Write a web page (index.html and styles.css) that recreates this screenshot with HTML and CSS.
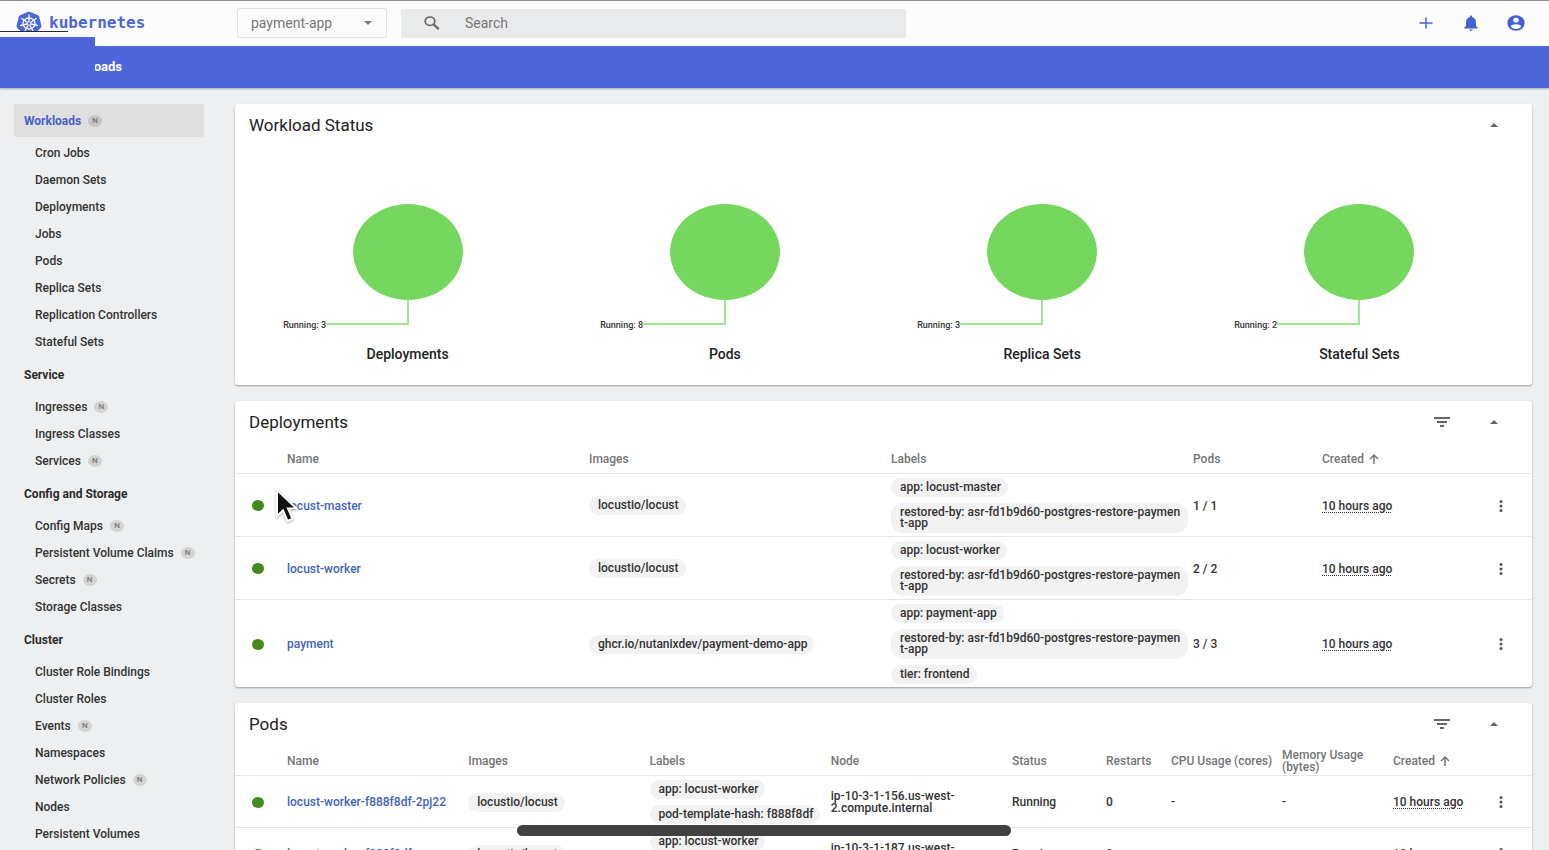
FILE: index.html
```html
<!DOCTYPE html>
<html lang="en">
<head>
<meta charset="utf-8">
<title>Kubernetes Dashboard</title>
<link rel="stylesheet" href="styles.css">
</head>
<body>
<svg class="sprite" aria-hidden="true">
  <symbol id="i-filter" viewBox="0 0 16 10"><path d="M0 0h16v2H0zM3 4h10v2H3zM6 8h4v2H6z"/></symbol>
  <symbol id="i-up" viewBox="0 0 8 4"><path d="M0 4l4-4 4 4z"/></symbol>
  <symbol id="i-more" viewBox="0 0 4 12"><circle cx="2" cy="1.6" r="1.5"/><circle cx="2" cy="6" r="1.5"/><circle cx="2" cy="10.4" r="1.5"/></symbol>
  <symbol id="i-sort" viewBox="0 0 10 10"><path d="M5 10V1.5M1 5l4-4 4 4" fill="none" stroke="currentColor" stroke-width="1.5"/></symbol>
</svg>
<div class="app">
  <header class="topbar">
    <a class="brand" href="#">
      <svg class="logo" viewBox="0 0 26 24" aria-hidden="true">
        <path d="M13 .5l9 3.8c.6.3 1 .8 1.200 1.400l2.200 9c.1.7 0 1.300-.4 1.800l-6.200 6.700c-.5.5-1 .8-1.700.8H8.900c-.7 0-1.200-.3-1.700-.8L1 16.500c-.4-.5-.5-1.100-.4-1.800l2.200-9C3 5.100 3.400 4.600 4 4.300z" fill="#4a67d6"/>
        <g fill="none" stroke="#fff" stroke-width="1.300">
          <ellipse cx="13" cy="12.500" rx="6" ry="5.500"/>
          <path d="M13 12.500V3.500M13 12.500l7.600-5.200M13 12.500l9 2.200M13 12.500l4.200 7.800M13 12.500l-4.200 7.800M13 12.500l-9 2.200M13 12.500L5.400 7.300"/>
        </g>
        <circle cx="13" cy="12.500" r="1.300" fill="#4a67d6"/>
      </svg>
      <span>kubernetes</span>
    </a>
    <div class="namespace">
      <select aria-label="Namespace"><option>payment-app</option></select>
      <svg class="caret" viewBox="0 0 8 4" aria-hidden="true"><path d="M0 0h8L4 4z"/></svg>
    </div>
    <label class="search">
      <svg viewBox="0 0 16 14" aria-hidden="true"><ellipse cx="6" cy="5.200" rx="4.800" ry="4.200" fill="none" stroke="currentColor" stroke-width="1.700"/><path d="M9.500 8.400l5.300 4.700" stroke="currentColor" stroke-width="2.100"/></svg>
      <input type="text" placeholder="Search" aria-label="Search">
    </label>
    <div class="tools">
      <button type="button" aria-label="Create"><svg width="18" height="16" viewBox="0 0 18 16"><path d="M9 2.500v11M2.500 8h13" stroke="currentColor" stroke-width="1.500"/></svg></button>
      <button type="button" aria-label="Notifications"><svg width="18" height="16" viewBox="0 0 18 16"><path d="M9 16c1 0 1.700-.6 1.700-1.400H7.300C7.300 15.400 8 16 9 16zM14 11V7c0-2.300-1.500-4.200-3.800-4.700v-.6C10.200 1 9.700.5 9 .5s-1.200.5-1.200 1.200v.6C5.500 2.800 4 4.700 4 7v4l-1.700 1.600v.9h13.400v-.9z" fill="currentColor"/></svg></button>
      <button type="button" aria-label="Account"><svg width="18" height="16" viewBox="0 0 18 16"><ellipse cx="9" cy="8" rx="8.700" ry="7.700" fill="currentColor"/><ellipse cx="9" cy="5.200" rx="2.700" ry="2.400" fill="#fff"/><path d="M9 9.200c2 0 5 .9 5.200 2.300C13.100 13 11.200 13.900 9 13.900S4.900 13 3.800 11.500C4 10.100 7 9.200 9 9.200z" fill="#fff"/></svg></button>
    </div>
  </header>
  <div class="crumbs"><h1>Workloads</h1></div>
  <div class="body">
    <nav class="side">
      <a class="head active" href="#">Workloads <i>N</i></a>
      <ul>
        <li><a href="#">Cron Jobs</a></li>
        <li><a href="#">Daemon Sets</a></li>
        <li><a href="#">Deployments</a></li>
        <li><a href="#">Jobs</a></li>
        <li><a href="#">Pods</a></li>
        <li><a href="#">Replica Sets</a></li>
        <li><a href="#">Replication Controllers</a></li>
        <li><a href="#">Stateful Sets</a></li>
      </ul>
      <a class="head" href="#">Service</a>
      <ul>
        <li><a href="#">Ingresses <i>N</i></a></li>
        <li><a href="#">Ingress Classes</a></li>
        <li><a href="#">Services <i>N</i></a></li>
      </ul>
      <a class="head" href="#">Config and Storage</a>
      <ul>
        <li><a href="#">Config Maps <i>N</i></a></li>
        <li><a href="#">Persistent Volume Claims <i>N</i></a></li>
        <li><a href="#">Secrets <i>N</i></a></li>
        <li><a href="#">Storage Classes</a></li>
      </ul>
      <a class="head" href="#">Cluster</a>
      <ul>
        <li><a href="#">Cluster Role Bindings</a></li>
        <li><a href="#">Cluster Roles</a></li>
        <li><a href="#">Events <i>N</i></a></li>
        <li><a href="#">Namespaces</a></li>
        <li><a href="#">Network Policies <i>N</i></a></li>
        <li><a href="#">Nodes</a></li>
        <li><a href="#">Persistent Volumes</a></li>
      </ul>
    </nav>
    <main class="main">
      <section class="card">
        <div class="card-head"><h2>Workload Status</h2><button type="button" aria-label="Collapse"><svg class="up"><use href="#i-up"/></svg></button></div>
        <div class="charts">
          <figure>
            <svg viewBox="0 0 254 130"><ellipse cx="127" cy="48" rx="55" ry="48"/><path d="M127 96v24H45"/><text x="45" y="124">Running: 3</text></svg>
            <figcaption>Deployments</figcaption>
          </figure>
          <figure>
            <svg viewBox="0 0 254 130"><ellipse cx="127" cy="48" rx="55" ry="48"/><path d="M127 96v24H45"/><text x="45" y="124">Running: 8</text></svg>
            <figcaption>Pods</figcaption>
          </figure>
          <figure>
            <svg viewBox="0 0 254 130"><ellipse cx="127" cy="48" rx="55" ry="48"/><path d="M127 96v24H45"/><text x="45" y="124">Running: 3</text></svg>
            <figcaption>Replica Sets</figcaption>
          </figure>
          <figure>
            <svg viewBox="0 0 254 130"><ellipse cx="127" cy="48" rx="55" ry="48"/><path d="M127 96v24H45"/><text x="45" y="124">Running: 2</text></svg>
            <figcaption>Stateful Sets</figcaption>
          </figure>
        </div>
      </section>

      <section class="card">
        <div class="card-head"><h2>Deployments</h2><button type="button" aria-label="Filter"><svg class="filter"><use href="#i-filter"/></svg></button><button type="button" aria-label="Collapse"><svg class="up"><use href="#i-up"/></svg></button></div>
        <table>
          <colgroup><col class="c-icon"><col><col><col><col class="c-pods"><col class="c-created"><col class="c-icon"></colgroup>
          <thead><tr><th></th><th>Name</th><th>Images</th><th>Labels</th><th>Pods</th><th>Created <svg class="sort"><use href="#i-sort"/></svg></th><th></th></tr></thead>
          <tbody>
            <tr>
              <td><span class="dot"></span></td><td><a href="#">locust-master</a></td>
              <td><div class="chips"><span>locustio/locust</span></div></td>
              <td><div class="chips"><span>app: locust-master</span><span>restored-by: asr-fd1b9d60-postgres-restore-payment-app</span></div></td>
              <td>1 / 1</td><td><span class="ago">10 hours ago</span></td>
              <td><button type="button" aria-label="Actions"><svg class="more"><use href="#i-more"/></svg></button></td>
            </tr>
            <tr>
              <td><span class="dot"></span></td><td><a href="#">locust-worker</a></td>
              <td><div class="chips"><span>locustio/locust</span></div></td>
              <td><div class="chips"><span>app: locust-worker</span><span>restored-by: asr-fd1b9d60-postgres-restore-payment-app</span></div></td>
              <td>2 / 2</td><td><span class="ago">10 hours ago</span></td>
              <td><button type="button" aria-label="Actions"><svg class="more"><use href="#i-more"/></svg></button></td>
            </tr>
            <tr>
              <td><span class="dot"></span></td><td><a href="#">payment</a></td>
              <td><div class="chips"><span>ghcr.io/nutanixdev/payment-demo-app</span></div></td>
              <td><div class="chips"><span>app: payment-app</span><span>restored-by: asr-fd1b9d60-postgres-restore-payment-app</span><span>tier: frontend</span></div></td>
              <td>3 / 3</td><td><span class="ago">10 hours ago</span></td>
              <td><button type="button" aria-label="Actions"><svg class="more"><use href="#i-more"/></svg></button></td>
            </tr>
          </tbody>
        </table>
      </section>

      <section class="card">
        <div class="card-head"><h2>Pods</h2><button type="button" aria-label="Filter"><svg class="filter"><use href="#i-filter"/></svg></button><button type="button" aria-label="Collapse"><svg class="up"><use href="#i-up"/></svg></button></div>
        <table>
          <colgroup><col class="c-icon"><col><col><col><col><col class="c-status"><col class="c-restarts"><col class="c-usage"><col class="c-usage"><col class="c-age"><col class="c-icon"></colgroup>
          <thead><tr><th></th><th>Name</th><th>Images</th><th>Labels</th><th>Node</th><th>Status</th><th>Restarts</th><th>CPU Usage (cores)</th><th>Memory Usage (bytes)</th><th>Created <svg class="sort"><use href="#i-sort"/></svg></th><th></th></tr></thead>
          <tbody>
            <tr>
              <td><span class="dot"></span></td><td><a href="#">locust-worker-f888f8df-2pj22</a></td>
              <td><div class="chips"><span>locustio/locust</span></div></td>
              <td><div class="chips"><span>app: locust-worker</span><span>pod-template-hash: f888f8df</span></div></td>
              <td>ip-10-3-1-156.us-west-2.compute.internal</td><td>Running</td><td>0</td><td>-</td><td>-</td>
              <td><span class="ago">10 hours ago</span></td>
              <td><button type="button" aria-label="Actions"><svg class="more"><use href="#i-more"/></svg></button></td>
            </tr>
            <tr>
              <td><span class="dot"></span></td><td><a href="#">locust-worker-f888f8df-</a></td>
              <td><div class="chips"><span>locustio/locust</span></div></td>
              <td><div class="chips"><span>app: locust-worker</span><span>pod-template-hash: f888f8df</span></div></td>
              <td>ip-10-3-1-187.us-west-2.compute.internal</td><td>Running</td><td>0</td><td>-</td><td>-</td>
              <td><span class="ago">10 hours ago</span></td>
              <td><button type="button" aria-label="Actions"><svg class="more"><use href="#i-more"/></svg></button></td>
            </tr>
          </tbody>
        </table>
      </section>
    </main>
  </div>
  <div class="patch"></div>
  <div class="handle"></div>
  <svg class="pointer" viewBox="0 0 24 36" aria-hidden="true"><path d="M2 2v26l6-5.500 4.500 10.500 5-2.200L13 20.500h8.500z" fill="#111" stroke="#fff" stroke-width="2"/></svg>
</div>
</body>
</html>
```
FILE: styles.css
```css
* { box-sizing: border-box; }
body { margin: 0; font: 500 12px/14px Roboto, "Liberation Sans", sans-serif; color: #333; }
a { color: inherit; text-decoration: none; }
button { border: 0; padding: 0; background: none; color: inherit; font: inherit; display: flex; align-items: center; justify-content: center; }
h1, h2, ul, figure { margin: 0; padding: 0; }
svg { fill: currentColor; flex: none; }
.sprite { position: absolute; width: 0; height: 0; }

.app { position: relative; display: flex; flex-direction: column; height: 100vh; overflow: hidden; background: #edeff0; }

.topbar { flex: none; display: flex; align-items: center; height: 46px; padding: 0 24px 1px 16px; background: #fcfcfd; border-top: 1px solid #8e8b8e; }
.brand { display: flex; align-items: center; gap: 7px; width: 221px; color: #4a67d6; font: 700 16px/20px "DejaVu Sans Mono", monospace; }
.logo { width: 26px; height: 24px; }
.namespace { position: relative; width: 150px; height: 30px; margin-right: 14px; }
.namespace select { width: 100%; height: 100%; padding: 0 13px; appearance: none; border: 1px solid #e2e2e2; border-radius: 2px; background: #fcfcfc; color: #777; font: 400 14px/18px Roboto, sans-serif; }
.caret { position: absolute; right: 15px; top: 13px; width: 8px; height: 4px; color: #777; }
.search { flex: 0 1 505px; display: flex; align-items: center; gap: 25px; height: 29px; padding: 0 23px; background: #e9eaeb; border-radius: 2px; color: #666; }
.search svg { width: 16px; height: 14px; }
.search input { flex: 1; min-width: 0; border: 0; padding: 0; background: none; color: #666; font: 400 14px/18px Roboto, sans-serif; }
.search input::placeholder { color: #777; opacity: 1; }
.tools { display: flex; gap: 27px; margin-left: auto; color: #4461d2; }

.crumbs { flex: none; height: 42px; padding: 0 60px; display: flex; align-items: center; background: #4d67db; color: #fff; box-shadow: 0 1px 2px rgba(0,0,0,.3); }
h1 { font-size: 13px; line-height: 18px; font-weight: 700; }

.body { flex: 1; min-height: 0; display: flex; overflow: hidden; }
.side { flex: none; width: 220px; padding: 16px 16px 0 14px; }
.side .head { display: flex; align-items: center; height: 36px; padding-left: 10px; font-weight: 700; color: #2b2b2b; }
.side .active { height: 33px; margin-bottom: 2px; background: #dfdfdf; color: #4560cd; border-radius: 2px; }
.side ul { list-style: none; padding: 0 0 2px 21px; }
.side li a { display: flex; align-items: center; height: 27px; }
.side i { width: 14px; height: 12px; margin-left: 7px; border-radius: 50%; background: #d2d3d3; color: #777; font: 500 8px/12px Roboto, sans-serif; text-align: center; }
.side .active i { background: #c4c4c4; }

.main { flex: 1; min-width: 0; display: flex; flex-direction: column; gap: 16px; padding: 16px 17px 0 15px; }
.card { flex: none; background: #fff; border-radius: 3px; box-shadow: 0 1px 2px rgba(0,0,0,.35); }
.card-head { display: flex; align-items: center; height: 41px; padding: 0 28px 0 14px; }
h2 { margin-right: auto; font-size: 17px; line-height: 20px; font-weight: 400; color: #222; }
.card-head button { width: 20px; height: 20px; margin-left: 32px; color: #666; }
.up { width: 8px; height: 4px; }
.filter { width: 16px; height: 10px; }

.charts { display: grid; grid-template-columns: repeat(4, 1fr); padding: 59px 14px 22px; }
figure { display: flex; flex-direction: column; align-items: center; gap: 11px; }
figure svg { width: 254px; height: 130px; overflow: visible; }
figure ellipse { fill: #75d75e; }
figure path { fill: none; stroke: #a3e394; stroke-width: 2; }
figure text { font-size: 9px; text-anchor: end; fill: #333; }
figcaption { font-size: 14px; line-height: 18px; color: #222; }

table { width: 100%; table-layout: fixed; border-collapse: separate; border-spacing: 0; }
.c-icon { width: 52px; }
.c-pods { width: 129px; }
.c-created { width: 158px; }
.c-status { width: 94px; }
.c-restarts { width: 65px; }
.c-usage { width: 111px; }
.c-age { width: 87px; }
th { height: 32px; padding: 2px 0 0; text-align: left; font-weight: 500; line-height: 12px; color: #757575; border-bottom: 1px solid #e6e6e6; }
td { padding: 4px 0 3px; line-height: 12px; border-bottom: 1px solid #e6e6e6; }
tr:last-child td { border-bottom: 0; }
td:first-child { padding-left: 17px; }
td:last-child button { width: 42px; height: 20px; color: #555; }
td a { color: #4463bd; }
.sort { width: 10px; height: 10px; margin-left: 2px; vertical-align: -1px; }
.more { width: 4px; height: 12px; }
.dot { display: block; width: 12px; height: 11px; border-radius: 50%; background: #448a1d; }
.chips { display: flex; flex-direction: column; align-items: flex-start; gap: 6px; margin-right: 5px; }
.chips span { padding: 4px 7px 4px 9px; line-height: 11px; border-radius: 12px; background: #f2f2f2; word-break: break-all; }
.ago { text-decoration: underline dotted 1px; text-underline-offset: 2px; }

.patch { position: absolute; left: 0; top: 31px; width: 95px; height: 57px; background: #4d67db; border-top: 6px solid #fcfcfd; }
.patch::before { content: ""; position: absolute; left: 0; top: -6px; width: 68px; height: 1px; background: #222945; }
.handle { position: absolute; left: 517px; bottom: 14px; width: 494px; height: 11px; border-radius: 6px; background: #414141; }
.pointer { position: absolute; left: 275px; top: 488px; width: 24px; height: 36px; filter: drop-shadow(0 1px 1px rgba(0,0,0,.3)); }
```
